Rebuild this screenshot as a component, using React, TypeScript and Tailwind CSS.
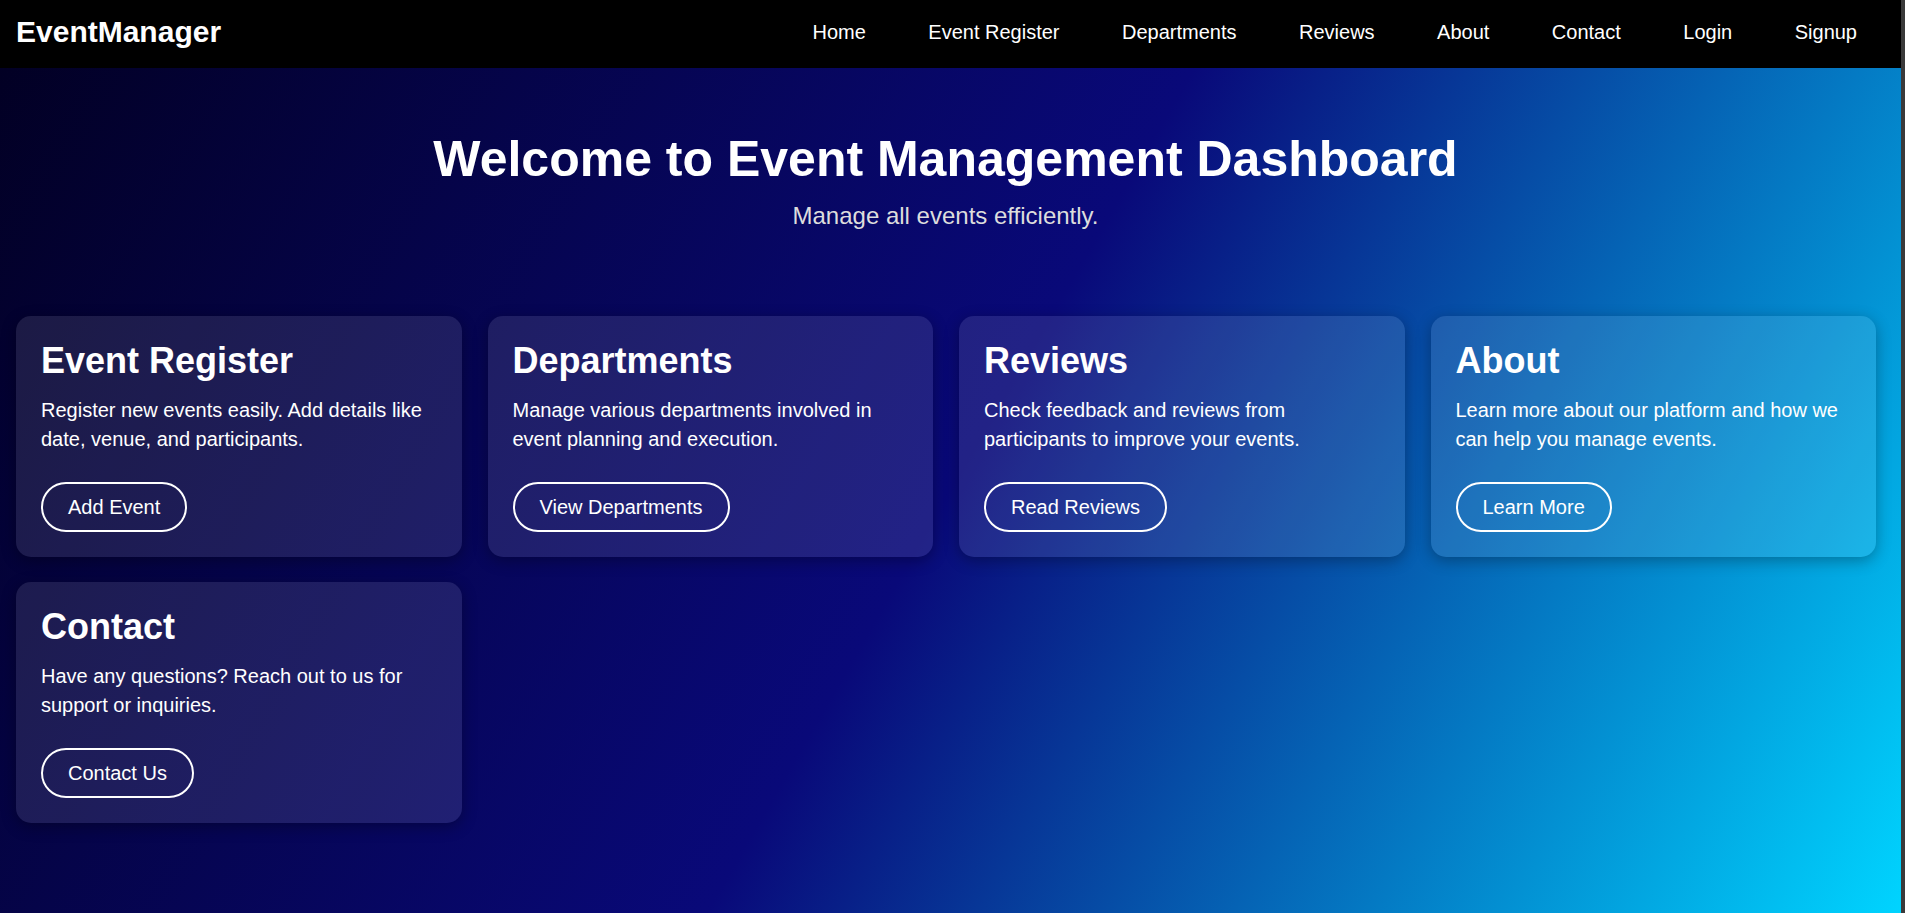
import React from "react";

interface Card {
  title: string;
  text: string;
  action: string;
}

const links = ["Home", "Event Register", "Departments", "Reviews", "About", "Contact", "Login", "Signup"];

const cards: Card[] = [
  {
    title: "Event Register",
    text: "Register new events easily. Add details like date, venue, and participants.",
    action: "Add Event",
  },
  {
    title: "Departments",
    text: "Manage various departments involved in event planning and execution.",
    action: "View Departments",
  },
  {
    title: "Reviews",
    text: "Check feedback and reviews from participants to improve your events.",
    action: "Read Reviews",
  },
  {
    title: "About",
    text: "Learn more about our platform and how we can help you manage events.",
    action: "Learn More",
  },
  {
    title: "Contact",
    text: "Have any questions? Reach out to us for support or inquiries.",
    action: "Contact Us",
  },
];

const App: React.FC = () => {
  return (
    <div className="flex min-h-screen w-full font-['Liberation_Sans',Arial,sans-serif] text-white">
      <div className="flex min-h-screen flex-1 flex-col">
        {/* top bar */}
        <header className="flex h-[68px] shrink-0 items-center justify-between bg-black pb-[4px] pl-[16px] pr-[44px]">
          <h1 className="text-[30px] font-bold leading-[36px]">EventManager</h1>
          <nav className="flex items-center gap-[62.5px]">
            {links.map((l) => (
              <a key={l} href="#" className="text-[20px] leading-[28px] text-white">
                {l}
              </a>
            ))}
          </nav>
        </header>

        <main className="flex-1 bg-[linear-gradient(120deg,#020024_0%,#090979_50%,#00d4ff_100%)] pb-10">
          <section className="pr-[10px] pt-[61px] text-center">
            <h2 className="text-[50px] font-bold leading-[60px]">Welcome to Event Management Dashboard</h2>
            <p className="mt-[12px] text-[24px] leading-[29px] text-[#dddddd]">Manage all events efficiently.</p>
          </section>

          <div className="mt-[86px] grid grid-cols-4 gap-x-[26px] gap-y-[25px] pl-4 pr-[25px]">
            {cards.map((c) => (
              <div
                key={c.title}
                className="rounded-[15px] bg-white/10 p-[25px] shadow-[0_4px_15px_rgba(0,0,0,0.3)]"
              >
                <h3 className="text-[36px] font-bold leading-[40px]">{c.title}</h3>
                <p className="mt-[15px] text-[20px] leading-[29px]">{c.text}</p>
                <button className="mt-[28px] rounded-full border-2 border-white bg-transparent px-[25px] py-[8px] text-[20px] leading-[30px] text-white">
                  {c.action}
                </button>
              </div>
            ))}
          </div>
        </main>
      </div>
      <div className="w-[4px] shrink-0 bg-[#3a3a3a]" />
    </div>
  );
};

export default App;
